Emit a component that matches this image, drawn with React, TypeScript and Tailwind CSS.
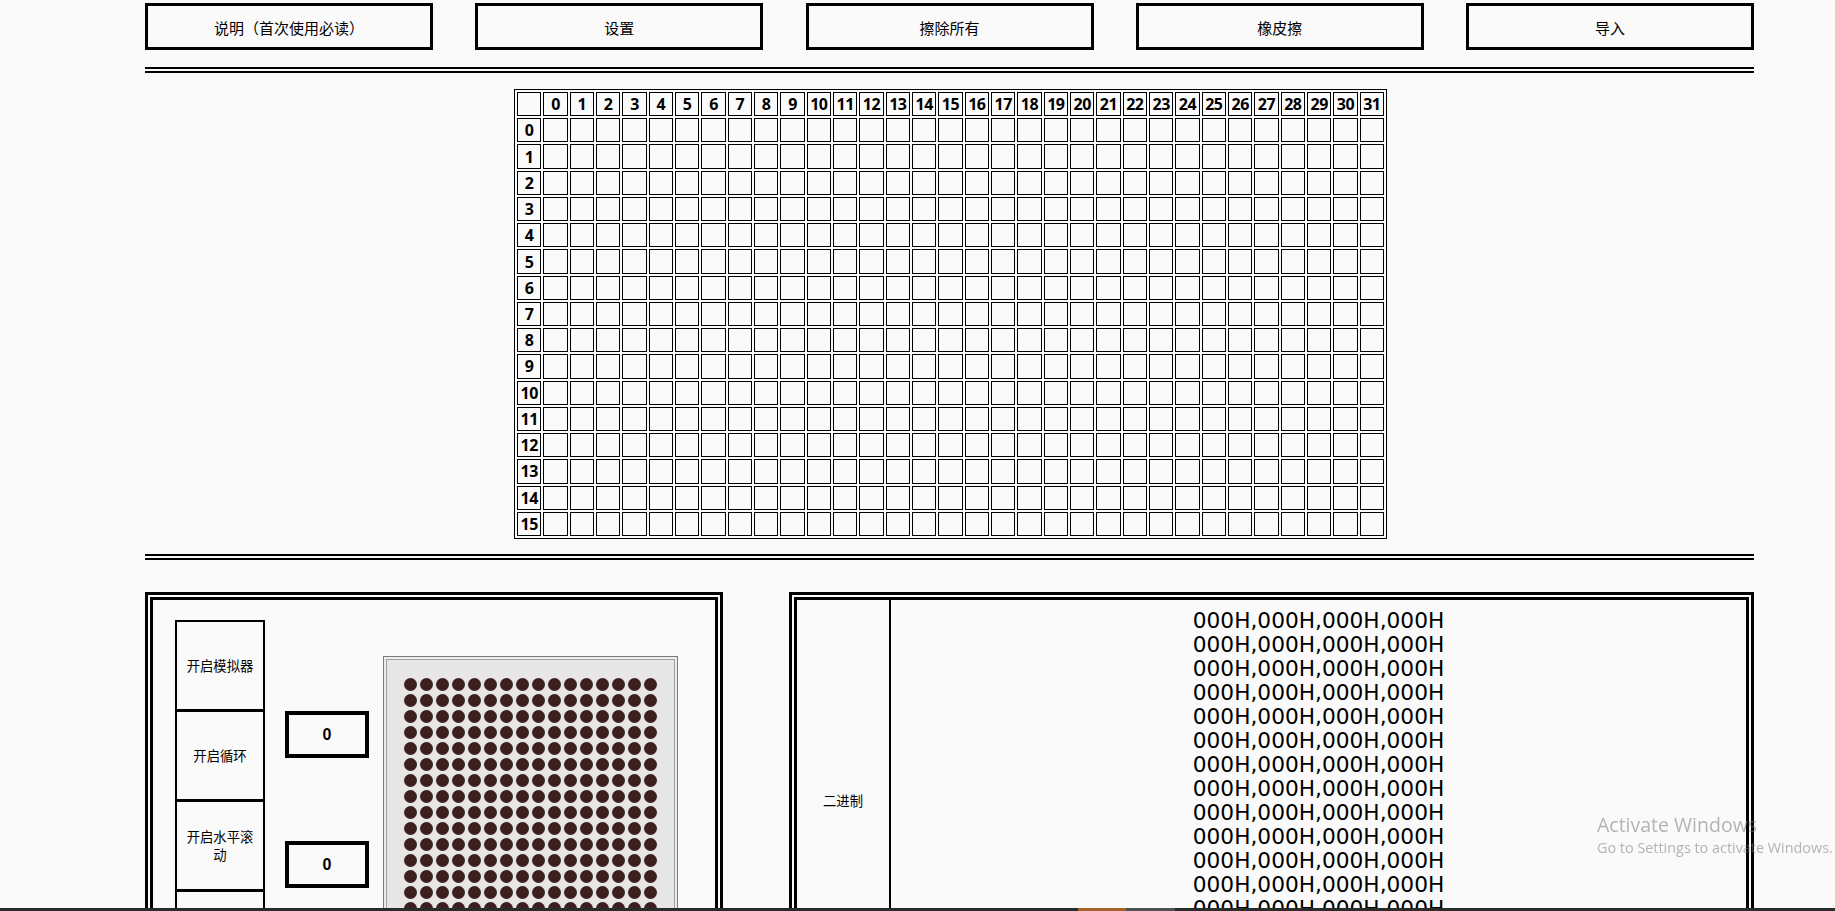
import React from "react";

const cjk = "font-['Noto_Sans_CJK_SC',sans-serif]";

const topButtons = ["说明（首次使用必读）", "设置", "擦除所有", "橡皮擦", "导入"];
const sideButtons = ["开启模拟器", "开启循环", "开启水平滚动", "开启垂直滚动"];
const cols = Array.from({ length: 32 }, (_, i) => i);
const rows = Array.from({ length: 16 }, (_, i) => i);

function Grid() {
  return (
    <div className="w-[873px] h-[450px] border border-black p-[2px] grid grid-cols-[repeat(33,minmax(0,1fr))] grid-rows-[repeat(17,minmax(0,1fr))] gap-[2px] font-['Noto_Sans',sans-serif] font-bold text-[16px] leading-none">
      <div className="border border-black" />
      {cols.map((c) => (
        <div key={"h" + c} className="border border-black flex items-center justify-center tracking-[-0.5px]">
          {c}
        </div>
      ))}
      {rows.map((r) => (
        <React.Fragment key={"r" + r}>
          <div className="border border-black flex items-center justify-center tracking-[-0.5px]">{r}</div>
          {cols.map((c) => (
            <div key={r + "-" + c} className="border border-black" />
          ))}
        </React.Fragment>
      ))}
    </div>
  );
}

function Matrix() {
  const dots = Array.from({ length: 256 }, (_, i) => i);
  return (
    <div className="ml-[14px] mt-[36px] border border-[#7a7a7a] bg-[#ececec] p-[2px]">
      <div className="border border-[#a0a0a0] bg-[#e6e6e6] px-[17px] pt-[18px] pb-[17px] grid grid-cols-[repeat(16,13px)] gap-[3px]">
        {dots.map((d) => (
          <div key={d} className="w-[13px] h-[13px] rounded-full bg-[#3d1f1f]" />
        ))}
      </div>
    </div>
  );
}

export default function App() {
  return (
    <div className="h-screen overflow-hidden bg-[#fafafa] text-black relative">
      <div className="ml-[145px] w-[1609px] pt-[3px]">
        <div className="flex justify-between">
          {topButtons.map((t) => (
            <button
              key={t}
              className={`w-[288px] h-[47px] border-[3px] border-black bg-[#fafafa] pt-[3px] text-[15px] text-black ${cjk}`}
            >
              {t}
            </button>
          ))}
        </div>

        <div className="mt-[17px] border-t-[6px] border-double border-black" />

        <div className="mt-[16px] flex justify-center pl-[2px]">
          <Grid />
        </div>

        <div className="mt-[15px] border-t-[6px] border-double border-black" />

        <div className="mt-[32px] flex justify-between items-start">
          {/* left panel */}
          <div className="w-[578px] h-[420px] border-[3px] border-black p-[2px] shrink-0">
            <div className="h-full border-[3px] border-black pl-[22px] pt-[20px] flex items-start">
              <div className="w-[90px] flex flex-col shrink-0">
                {sideButtons.map((b, i) => (
                  <button
                    key={b}
                    className={
                      i === 0
                        ? `h-[91px] border-2 border-black bg-[#fafafa] text-[13.33px] leading-[1.3] px-[7px] text-black ${cjk}`
                        : `h-[91px] -mt-px border-2 border-black bg-[#fafafa] text-[13.33px] leading-[1.3] px-[7px] text-black ${cjk}`
                    }
                  >
                    {b}
                  </button>
                ))}
              </div>
              <div className="ml-[20px] mt-[91px] flex flex-col gap-[83px] shrink-0">
                <div className="w-[84px] h-[47px] border-4 border-black flex items-center justify-center font-bold text-[16px] font-['Liberation_Sans',sans-serif]">
                  0
                </div>
                <div className="w-[84px] h-[47px] border-4 border-black flex items-center justify-center font-bold text-[16px] font-['Liberation_Sans',sans-serif]">
                  0
                </div>
              </div>
              <Matrix />
            </div>
          </div>

          {/* right panel */}
          <div className="w-[965px] border-[3px] border-black p-[2px] shrink-0">
            <div className="border-[3px] border-black flex">
              <div className={`w-[92px] flex items-center justify-center text-[13.33px] ${cjk}`}>二进制</div>
              <div className="flex-1 border-l-2 border-black pt-[9px] pb-[9px] text-center font-['DejaVu_Sans',sans-serif] text-[21.7px] leading-[24px]">
                {rows.map((r) => (
                  <div key={r}>000H,000H,000H,000H</div>
                ))}
              </div>
            </div>
          </div>
        </div>
      </div>

      {/* Windows activation watermark */}
      <div className="fixed left-[1597px] top-[813px] pointer-events-none font-['Open_Sans',sans-serif] text-[rgba(120,120,120,0.55)] whitespace-nowrap">
        <div className="text-[19.5px] leading-[24px]">Activate Windows</div>
        <div className="text-[14.4px] leading-[21px]">Go to Settings to activate Windows.</div>
      </div>

      {/* taskbar edge */}
      <div className="fixed left-0 right-0 bottom-0 h-[3px] bg-[#2b2b2b] flex">
        <div className="w-[1078px]" />
        <div className="w-[48px] bg-[#a5632b]" />
        <div className="w-[49px] bg-[#505050]" />
      </div>
    </div>
  );
}
